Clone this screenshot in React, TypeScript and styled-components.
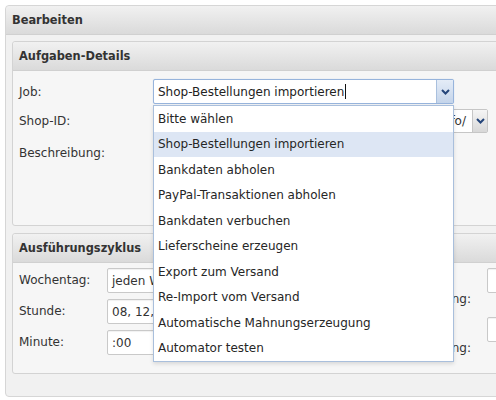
import styled, { createGlobalStyle } from "styled-components";

const GlobalStyle = createGlobalStyle`
  html, body {
    margin: 0;
    padding: 0;
    background: #fff;
    overflow: hidden;
  }
  body {
    font-family: "DejaVu Sans", Verdana, sans-serif;
    font-size: 12px;
    color: #333;
  }
  * {
    box-sizing: border-box;
  }
`;

const jobs = [
  "Bitte wählen",
  "Shop-Bestellungen importieren",
  "Bankdaten abholen",
  "PayPal-Transaktionen abholen",
  "Bankdaten verbuchen",
  "Lieferscheine erzeugen",
  "Export zum Versand",
  "Re-Import vom Versand",
  "Automatische Mahnungserzeugung",
  "Automator testen",
];

const Panel = styled.div`
  margin: 5px 0 0 5px;
  width: 500px;
  border: 1px solid #d6d6d6;
  border-radius: 4px;
  background: #f1f1f1;
`;

const PanelHeader = styled.div`
  height: 29px;
  display: flex;
  align-items: center;
  padding-left: 6px;
  font-weight: bold;
  font-size: 11.4px;
  color: #333;
  background: linear-gradient(#f1f1f1, #dadada);
  border-bottom: 1px solid #d0d0d0;
  border-radius: 4px 4px 0 0;
`;

const PanelBody = styled.div`
  display: flex;
  flex-direction: column;
  gap: 7px;
  padding: 6px 0 22px 6px;
`;

const Box = styled.div`
  border: 1px solid #d3d3d3;
  border-radius: 3px;
  background: #f6f6f6;
`;

const BoxHeader = styled(PanelHeader)`
  border-radius: 3px 3px 0 0;
`;

const BoxBody = styled.div<{ $pad: string }>`
  display: flex;
  padding: ${(p) => p.$pad};
`;

const Rows = styled.div<{ $gap: number }>`
  display: flex;
  flex-direction: column;
  gap: ${(p) => p.$gap}px;
`;

const FieldRow = styled.div<{ $top?: boolean; $offset?: number }>`
  display: flex;
  align-items: ${(p) => (p.$top ? "flex-start" : "center")};
  margin-top: ${(p) => p.$offset ?? 0}px;
`;

const Label = styled.div<{ $w: number; $padTop?: number }>`
  width: ${(p) => p.$w}px;
  flex-shrink: 0;
  padding-top: ${(p) => p.$padTop ?? 0}px;
  line-height: 15px;
`;

const SideLabel = styled(Label)`
  display: flex;
  justify-content: flex-end;
  white-space: nowrap;
  margin-right: 16px;
`;

const ComboWrap = styled.div`
  position: relative;
  width: 301px;
`;

const Combo = styled.div`
  display: flex;
  height: 25px;
  border: 1px solid #97b4dc;
  border-radius: 2px;
  background: #fff;
  box-shadow: 0 0 1px rgba(90, 140, 210, 0.4);
`;

const ComboText = styled.div`
  flex: 1;
  display: flex;
  align-items: center;
  padding-left: 4px;
  color: #222;
`;

const Caret = styled.span`
  display: inline-block;
  width: 1px;
  height: 15px;
  margin-left: 1px;
  background: #111;
`;

const ArrowButton = styled.div<{ $blue?: boolean }>`
  width: ${(p) => (p.$blue ? 17 : 15)}px;
  display: flex;
  align-items: center;
  justify-content: center;
  border-left: 1px solid ${(p) => (p.$blue ? "#a9c0de" : "#c6c6c6")};
  background: ${(p) =>
    p.$blue
      ? "linear-gradient(#e4ecf7, #c4d4ea)"
      : "linear-gradient(#f5f5f5, #d8d8d8)"};
`;

const DropList = styled.ul`
  position: absolute;
  top: calc(100% + 1px);
  left: 0;
  width: 100%;
  margin: 0;
  padding: 0;
  list-style: none;
  background: #fff;
  border: 1px solid #a9bfdc;
  box-shadow: 0 2px 4px rgba(0, 0, 0, 0.12);
  z-index: 10;
`;

const DropItem = styled.li<{ $active?: boolean }>`
  height: 25.5px;
  display: flex;
  align-items: center;
  padding-left: 4px;
  color: #262626;
  background: ${(p) => (p.$active ? "#dde6f4" : "transparent")};
`;

const Select = styled.div<{ $w: number }>`
  display: flex;
  width: ${(p) => p.$w}px;
  height: 24px;
  border: 1px solid #c6c6c6;
  border-radius: 2px;
  background: #fff;
`;

const SelectText = styled.div`
  flex: 1;
  display: flex;
  align-items: center;
  justify-content: flex-end;
  padding-right: 6px;
  overflow: hidden;
  white-space: nowrap;
`;

const TextArea = styled.div`
  width: 288px;
  height: 75px;
  border: 1px solid #c6c6c6;
  border-radius: 2px;
  background: #fff;
`;

const Input = styled.div<{ $w: number }>`
  width: ${(p) => p.$w}px;
  height: 25px;
  display: flex;
  align-items: center;
  padding-left: 4px;
  border: 1px solid #c9c9c9;
  border-radius: 2px;
  background: #fff;
  box-shadow: inset 0 1px 1px rgba(0, 0, 0, 0.06);
  white-space: nowrap;
  overflow: hidden;
`;

const SideColumn = styled(Rows)`
  margin-left: 44px;
`;

const Chevron = () => (
  <svg width="9" height="6" viewBox="0 0 9 6">
    <polyline
      points="1,1 4.5,4.5 8,1"
      fill="none"
      stroke="#24457a"
      strokeWidth="2"
    />
  </svg>
);

export default function App() {
  return (
    <>
      <GlobalStyle />
      <Panel>
        <PanelHeader>Bearbeiten</PanelHeader>
        <PanelBody>
          <Box>
            <BoxHeader>Aufgaben-Details</BoxHeader>
            <BoxBody $pad="8px 0 10px 6px">
              <Rows $gap={5}>
                <FieldRow>
                  <Label $w={134} $padTop={2}>Job:</Label>
                  <ComboWrap>
                    <Combo>
                      <ComboText>
                        Shop-Bestellungen importieren
                        <Caret />
                      </ComboText>
                      <ArrowButton $blue>
                        <Chevron />
                      </ArrowButton>
                    </Combo>
                    <DropList>
                      {jobs.map((job, i) => (
                        <DropItem key={job} $active={i === 1}>
                          {job}
                        </DropItem>
                      ))}
                    </DropList>
                  </ComboWrap>
                </FieldRow>
                <FieldRow>
                  <Label $w={134}>Shop-ID:</Label>
                  <Select $w={335}>
                    <SelectText>Mein Shop – www.meinshop.de/info/</SelectText>
                    <ArrowButton>
                      <Chevron />
                    </ArrowButton>
                  </Select>
                </FieldRow>
                <FieldRow $top $offset={2}>
                  <Label $w={134} $padTop={6}>
                    Beschreibung:
                  </Label>
                  <TextArea />
                </FieldRow>
              </Rows>
            </BoxBody>
          </Box>
          <Box>
            <BoxHeader>Ausführungszyklus</BoxHeader>
            <BoxBody $pad="5px 0 17px 6px">
              <Rows $gap={6}>
                <FieldRow>
                  <Label $w={88}>Wochentag:</Label>
                  <Input $w={190}>jeden Wochentag</Input>
                </FieldRow>
                <FieldRow>
                  <Label $w={88}>Stunde:</Label>
                  <Input $w={190}>08, 12, 16</Input>
                </FieldRow>
                <FieldRow>
                  <Label $w={88}>Minute:</Label>
                  <Input $w={190}>:00</Input>
                </FieldRow>
              </Rows>
              <SideColumn $gap={10}>
                <FieldRow $top>
                  <SideLabel $w={130} $padTop={24}>
                    Benachrichtigung:
                  </SideLabel>
                  <Input $w={60} />
                </FieldRow>
                <FieldRow $top>
                  <SideLabel $w={130} $padTop={24}>
                    Fehlermeldung:
                  </SideLabel>
                  <Input $w={60} />
                </FieldRow>
              </SideColumn>
            </BoxBody>
          </Box>
        </PanelBody>
      </Panel>
    </>
  );
}
